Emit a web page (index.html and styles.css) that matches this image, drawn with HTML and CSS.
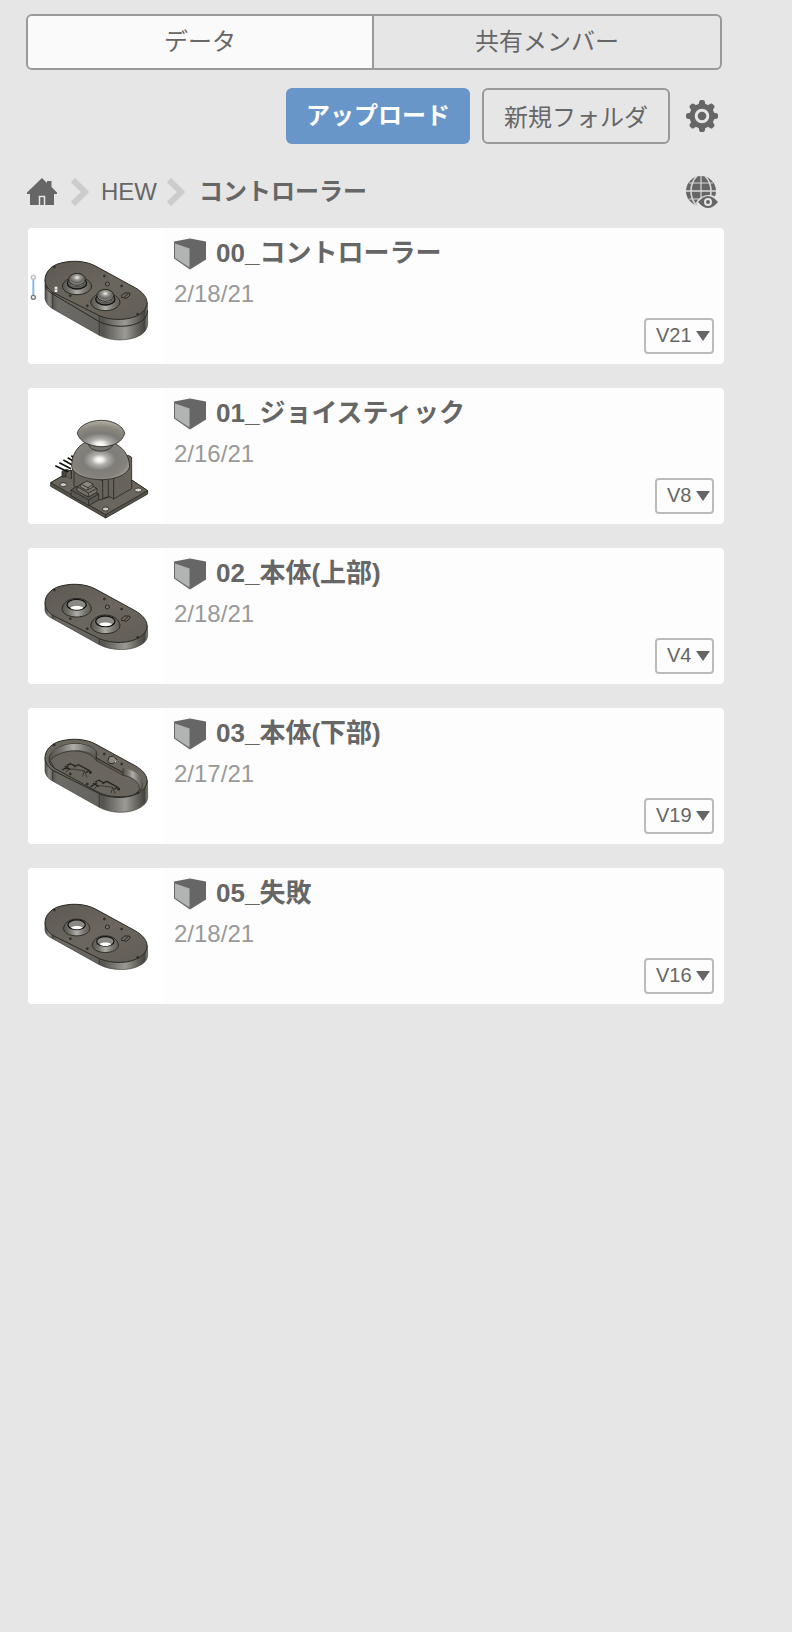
FILE: index.html
```html
<!DOCTYPE html>
<html lang="ja">
<head>
<meta charset="utf-8">
<meta name="viewport" content="width=device-width, initial-scale=1">
<title>コントローラー</title>
<link rel="stylesheet" href="styles.css">
</head>
<body>
<svg class="defs" aria-hidden="true" width="0" height="0">
  <defs>
    <linearGradient id="side" gradientUnits="userSpaceOnUse" x1="75" y1="0" x2="383" y2="0">
      <stop offset="0" stop-color="#4c4a45"/><stop offset=".04" stop-color="#8b8982"/><stop offset=".08" stop-color="#5b5954"/>
      <stop offset=".12" stop-color="#6c6b66"/><stop offset=".5" stop-color="#65635e"/><stop offset=".56" stop-color="#55534d"/>
      <stop offset=".78" stop-color="#9c9a94"/><stop offset=".9" stop-color="#65635c"/><stop offset=".97" stop-color="#45433e"/><stop offset="1" stop-color="#8b8982"/>
    </linearGradient>
    <linearGradient id="face" x1="0" y1="0" x2="1" y2="1">
      <stop offset="0" stop-color="#5d5951"/><stop offset=".5" stop-color="#6b675e"/><stop offset="1" stop-color="#625e55"/>
    </linearGradient>
    <linearGradient id="cone" x1="0" y1="0" x2="1" y2="0">
      <stop offset="0" stop-color="#55534e"/><stop offset=".25" stop-color="#77756f"/><stop offset=".5" stop-color="#b0aeaa"/><stop offset=".75" stop-color="#7c7a75"/><stop offset="1" stop-color="#5d5b55"/>
    </linearGradient>
    <radialGradient id="knob" cx=".5" cy=".35" r=".65">
      <stop offset="0" stop-color="#f4f3f1"/><stop offset=".3" stop-color="#9b9994"/><stop offset=".65" stop-color="#66645f"/><stop offset="1" stop-color="#9a9892"/>
    </radialGradient>
    <radialGradient id="dome" cx=".48" cy=".48" r=".62">
      <stop offset="0" stop-color="#fff"/><stop offset=".1" stop-color="#f0efed"/><stop offset=".22" stop-color="#b3b1ad"/><stop offset=".45" stop-color="#7f7d78"/><stop offset=".75" stop-color="#85827c"/><stop offset="1" stop-color="#b0aba0"/>
    </radialGradient>
    <radialGradient id="cap" cx=".48" cy=".92" r=".9">
      <stop offset="0" stop-color="#fff"/><stop offset=".1" stop-color="#f0efed"/><stop offset=".25" stop-color="#aeaca8"/><stop offset=".48" stop-color="#7c7a75"/><stop offset=".75" stop-color="#8b8880"/><stop offset="1" stop-color="#b5b0a5"/>
    </radialGradient>
    <path id="outline" d="M98 217C64 195 68 152 110 133C148 119 196 121 228 139L345 203C387 226 392 259 362 281C330 303 275 303 238 287Z"/>
    <g id="plate-top">
      <use href="#outline" fill="url(#face)" stroke="#292824" stroke-width="3"/>
      <g fill="#3c3a36" stroke="#24231f" stroke-width="2">
        <circle cx="103" cy="141" r="3"/><circle cx="253" cy="168" r="3"/><circle cx="305" cy="198" r="3"/>
        <circle cx="151" cy="227" r="3"/><circle cx="202" cy="257" r="3"/><circle cx="353" cy="283" r="3"/>
      </g>
      <circle cx="262" cy="192" r="6" fill="#77736a" stroke="#292824" stroke-width="3"/>
      <path d="M304 227L314 219H329L330 225L320 235L305 232ZM313 232L324 221" fill="#6b675e" stroke="#292824" stroke-width="3"/>
    </g>
    <g id="slab">
      <path d="M75 178V203C77 214 86 221 98 227L238 305C275 324 330 325 362 306C376 298 383 288 383 275L382 248Z" fill="url(#side)" stroke="#403e3a" stroke-width="2"/>
      <path d="M98 217V227M238 287V305" stroke="#292824" stroke-width="2"/>
      <use href="#plate-top"/>
    </g>
    <g id="hole">
      <path d="M-44 9C-42-5-28-22 0-22S42-5 44 9C44 24 23 34 0 34S-44 24-44 9Z" fill="url(#cone)" stroke="#292824" stroke-width="3"/>
      <ellipse cy="-3" rx="29" ry="16" fill="#8b8984" stroke="#11110f" stroke-width="4"/>
      <path d="M-19 6C-14-1 15-1 20 6C14 14-14 14-19 6Z" fill="#fff"/>
    </g>
    <g id="stick">
      <path d="M-44 18C-42 5-25-9 0-9S42 5 44 18C44 33 23 44 0 44S-44 33-44 18Z" fill="url(#cone)" stroke="#292824" stroke-width="3"/>
      <ellipse cy="9" rx="29" ry="18" fill="#65635e" stroke="#11110f" stroke-width="4"/>
      <path d="M-18 4V14C-14 22 14 22 18 14V4Z" fill="#a9a7a1" stroke="#292824" stroke-width="2"/>
      <ellipse cy="-2" rx="25" ry="18" fill="url(#knob)" stroke="#292824" stroke-width="3"/>
    </g>
    <symbol id="cube" viewBox="0 0 32 31">
      <path d="M0 3L16 0L32 3V21L16 31L0 20Z" fill="#666"/>
      <path d="M1 5L15.500 10V29L1 19.500Z" fill="#b2b4b3"/>
    </symbol>
    <symbol id="chevron" viewBox="0 0 18 28">
      <path d="M2 2L14 14L2 26" fill="none" stroke="#ccc" stroke-width="6"/>
    </symbol>
  </defs>
</svg>

<main class="panel">
  <div class="tabs" role="tablist">
    <button class="tab tab-active" role="tab" aria-selected="true">データ</button>
    <button class="tab" role="tab" aria-selected="false">共有メンバー</button>
  </div>

  <div class="toolbar">
    <button class="button button-primary">アップロード</button>
    <button class="button">新規フォルダ</button>
    <button class="icon-button" aria-label="設定">
      <svg class="icon" viewBox="0 0 32 32" fill="#666">
        <circle cx="16" cy="16" r="12.500"/>
        <path id="tooth" d="M12.500 5L13.200 1.500Q13.500 0 15 0H17Q18.500 0 18.800 1.500L19.500 5V27L18.800 30.500Q18.500 32 17 32H15Q13.500 32 13.200 30.500L12.500 27Z"/>
        <use href="#tooth" transform="rotate(45 16 16)"/><use href="#tooth" transform="rotate(90 16 16)"/><use href="#tooth" transform="rotate(135 16 16)"/>
        <circle cx="16" cy="16" r="5.800" stroke="#e6e6e6" stroke-width="3"/>
      </svg>
    </button>
  </div>

  <div class="pathbar">
    <nav class="crumbs" aria-label="パス">
      <a class="crumb-home" href="#" aria-label="ホーム">
        <svg class="home" viewBox="0 0 30 28">
          <path d="M15 0L20 5V3H24.500V9L30 14.500V16H27V27H3V16H0V14.500Z" fill="#666"/>
          <path d="M12.500 27V18.500H17.500V27" fill="#666" stroke="#e6e6e6" stroke-width="1.500"/>
        </svg>
      </a>
      <svg class="chevron"><use href="#chevron"/></svg>
      <a class="crumb" href="#">HEW</a>
      <svg class="chevron"><use href="#chevron"/></svg>
      <span class="crumb crumb-current" aria-current="page">コントローラー</span>
    </nav>
    <button class="icon-button" aria-label="公開設定">
      <svg class="icon" viewBox="0 0 32 32">
        <circle cx="15" cy="15" r="15" fill="#666"/>
        <g fill="none" stroke="#d8d8d8"><path d="M0 15H30" stroke-width="1.600"/><path d="M3 7H27M3 23H27M15 0V30" stroke-width="1.200"/><path d="M11 0C3 8 3 22 11 30M19 0C27 8 27 22 19 30" stroke-width="1.600"/></g>
        <path d="M10 27C14 18 27 16 34 24V34H14Z" fill="#e6e6e6"/>
        <path d="M12 26Q22 14 32 26Q22 38 12 26Z" fill="#666"/>
        <circle cx="22" cy="26" r="3" fill="#666" stroke="#e6e6e6" stroke-width="2"/>
      </svg>
    </button>
  </div>

  <ul class="files">
    <li class="file">
      <svg class="thumb" viewBox="24 24 408 408" role="img" aria-label="コントローラー">
        <path d="M75 178V235C77 249 86 259 98 266L238 346C275 365 330 364 362 345C376 335 383 325 383 309L382 248Z" fill="url(#side)" stroke="#403e3a" stroke-width="2"/>
        <path d="M76 196C79 208 87 216 98 222L238 305C275 323 330 324 362 305C375 297 382 288 382 270" fill="none" stroke="#292824" stroke-width="3"/>
        <path d="M98 217V266M238 287V346" stroke="#292824" stroke-width="2"/>
        <use href="#plate-top"/>
        <use href="#stick" x="171" y="180"/><use href="#stick" x="256" y="228"/>
        <path d="M108 200V216" stroke="#f4f4f2" stroke-width="8"/><path d="M103 208H111" stroke="#77736a" stroke-width="2"/>
        <path d="M40 178V227" stroke="#8db9e8" stroke-width="6"/>
        <g fill="#fff" stroke-width="4"><circle cx="40" cy="172" r="6" stroke="#bbb"/><circle cx="40" cy="232" r="6" stroke="#777"/></g>
      </svg>
      <div class="details">
        <h2 class="name"><svg class="cube"><use href="#cube"/></svg>00_コントローラー</h2>
        <p class="date">2/18/21</p>
      </div>
      <div class="version"><select class="version-select" aria-label="バージョン"><option>V21</option></select><svg class="arrow" viewBox="0 0 14 10"><path d="M0 0H14L7 10Z" fill="#666"/></svg></div>
    </li>

    <li class="file">
      <svg class="thumb" viewBox="24 24 408 408" role="img" aria-label="ジョイスティック">
        <g fill="none" stroke="#292824" stroke-width="2.500" stroke-linejoin="round">
          <path d="M92 308L160 269L335 300L383 332V342L257 414L92 319Z" fill="#55524b"/>
          <path d="M92 308L160 269L335 300L383 332L257 404Z" fill="#6a665d"/>
          <path d="M257 404V414"/>
          <ellipse cx="130" cy="314" rx="10" ry="6" fill="#c9c8c4"/><ellipse cx="355" cy="330" rx="11" ry="6" fill="#d5d4d1"/><ellipse cx="257" cy="387" rx="10" ry="6" fill="#c9c8c4"/>
          <path d="M126 274L140 268L154 274V296L140 290L126 291Z" fill="#4a4843"/><path d="M138 290V277L154 270V296" fill="#625f57"/>
        </g>
        <path d="M106 257L143 275M118 248L153 266M130 240L158 256M143 233L160 243M154 227L162 234" stroke="#11110f" stroke-width="5"/>
        <g fill="none" stroke="#292824" stroke-width="2.500" stroke-linejoin="round">
          <path d="M162 275V320L240 360L270 350L281 357L335 326V232L325 226Z" fill="#67635b"/>
          <path d="M248 295V356L265 350V296M281 292V357M240 298L248 303"/>
          <path d="M153 330L171 319L236 342V360L206 377L153 347Z" fill="#5b5851"/>
          <path d="M171 320L199 307L231 326V337L205 351L171 332Z" fill="#77736a"/>
          <path d="M205 340V351M171 320L205 339L231 325M206 360V377M153 330L206 360L236 342"/>
          <path d="M181 321V314L201 303L219 312V321L200 331Z" fill="#8b877e"/><path d="M184 313L204 323L219 313M204 323V330"/>
          <path d="M155 254C157 220 176 191 207 184L276 187C309 199 327 226 329 258C325 284 286 299 242 299C194 298 153 281 155 254Z" fill="url(#dome)"/>
          <path d="M205 193C215 220 268 220 280 193Z" fill="#77746d"/>
          <path d="M172 160C175 139 206 122 242 121S311 139 314 160C308 187 276 201 243 200S179 186 172 160Z" fill="url(#cap)"/>
        </g>
      </svg>
      <div class="details">
        <h2 class="name"><svg class="cube"><use href="#cube"/></svg>01_ジョイスティック</h2>
        <p class="date">2/16/21</p>
      </div>
      <div class="version"><select class="version-select" aria-label="バージョン"><option>V8</option></select><svg class="arrow" viewBox="0 0 14 10"><path d="M0 0H14L7 10Z" fill="#666"/></svg></div>
    </li>

    <li class="file">
      <svg class="thumb" viewBox="24 24 408 408" role="img" aria-label="本体(上部)">
        <use href="#slab" y="9"/>
        <use href="#hole" x="170" y="197"/><use href="#hole" x="256" y="247"/>
      </svg>
      <div class="details">
        <h2 class="name"><svg class="cube"><use href="#cube"/></svg>02_本体(上部)</h2>
        <p class="date">2/18/21</p>
      </div>
      <div class="version"><select class="version-select" aria-label="バージョン"><option>V4</option></select><svg class="arrow" viewBox="0 0 14 10"><path d="M0 0H14L7 10Z" fill="#666"/></svg></div>
    </li>

    <li class="file">
      <svg class="thumb" viewBox="24 24 408 408" role="img" aria-label="本体(下部)">
        <path d="M75 172V214C77 227 86 237 98 243L238 322C275 342 330 342 362 322C376 313 383 304 383 289L382 242Z" fill="url(#side)" stroke="#403e3a" stroke-width="2"/>
        <path d="M98 211V243M238 281V322" stroke="#292824" stroke-width="2"/>
        <use href="#outline" y="-6" fill="#6b675e" stroke="#292824" stroke-width="3"/>
        <path d="M104 205C78 188 83 160 116 142C151 126 193 129 217 143C230 151 233 161 228 173L308 217C326 206 355 222 364 242C376 272 342 290 304 290C278 290 256 287 238 278Z" fill="#5d5951" stroke="#292824" stroke-width="3"/>
        <path d="M91 181C85 168 98 150 116 142C151 126 193 129 217 143C230 151 233 160 230 171C206 142 120 144 91 181Z" fill="url(#cone)"/>
        <path d="M309 205C342 208 369 229 368 252Q364 266 358 270C359 250 338 231 309 226Z" fill="url(#cone)"/>
        <path d="M91 182C121 144 204 142 229 182L309 226C341 231 360 250 358 270C352 282 334 290 304 290C278 290 256 287 238 278L104 205Z" fill="#6a665d" stroke="#292824" stroke-width="2"/>
        <path d="M229 155V182M309 205V226" stroke="#292824" stroke-width="2"/>
        <g id="contacts" fill="none" stroke="#24231f" stroke-width="4">
          <path d="M127 210L146 199M134 199L151 209M151 190L167 199M140 196L154 190M162 201L175 194L207 211L198 218"/>
          <path d="M154 207L193 212L201 232M193 212L188 230" stroke-width="2"/>
          <circle cx="211" cy="217" r="2.500"/><path d="M137 218Q141 208 154 207" stroke-width="2"/>
        </g>
        <use href="#contacts" x="85" y="50"/>
        <path d="M263 184L268 170L280 168L290 178L280 191L270 190Z" fill="#8c8981" stroke="#292824" stroke-width="3"/>
        <path d="M284 183L290 180L285 188Z" fill="#fff"/>
        <g fill="#3c3a36" stroke="#24231f" stroke-width="2"><circle cx="103" cy="135" r="3"/><circle cx="253" cy="162" r="3"/><circle cx="305" cy="192" r="3"/><circle cx="151" cy="222" r="3"/><circle cx="202" cy="252" r="3"/><circle cx="353" cy="279" r="3"/></g>
      </svg>
      <div class="details">
        <h2 class="name"><svg class="cube"><use href="#cube"/></svg>03_本体(下部)</h2>
        <p class="date">2/17/21</p>
      </div>
      <div class="version"><select class="version-select" aria-label="バージョン"><option>V19</option></select><svg class="arrow" viewBox="0 0 14 10"><path d="M0 0H14L7 10Z" fill="#666"/></svg></div>
    </li>

    <li class="file">
      <svg class="thumb" viewBox="24 24 408 408" role="img" aria-label="失敗">
        <use href="#slab" y="9"/>
        <use href="#hole" transform="translate(170 197) scale(.9)"/><use href="#hole" transform="translate(256 247) scale(.9)"/>
      </svg>
      <div class="details">
        <h2 class="name"><svg class="cube"><use href="#cube"/></svg>05_失敗</h2>
        <p class="date">2/18/21</p>
      </div>
      <div class="version"><select class="version-select" aria-label="バージョン"><option>V16</option></select><svg class="arrow" viewBox="0 0 14 10"><path d="M0 0H14L7 10Z" fill="#666"/></svg></div>
    </li>
  </ul>
</main>
</body>
</html>
```
FILE: styles.css
```css
* {
  box-sizing: border-box;
}

body {
  margin: 0;
  background: #e6e6e6;
  color: #666;
  font-family: "Liberation Sans", "Noto Sans CJK JP", sans-serif;
  font-size: 24px;
}

button,
select {
  margin: 0;
  color: inherit;
  font: inherit;
}

svg {
  display: block;
  flex: none;
}

.defs {
  position: absolute;
}

.panel {
  padding: 14px 68px 24px 26px;
}

.tabs {
  display: grid;
  grid-template-columns: 1fr 1fr;
  height: 56px;
  margin-right: 2px;
  overflow: hidden;
  border: 2px solid #999;
  border-radius: 6px;
}

.tab {
  padding: 0 0 6px;
  border: 0;
  background: transparent;
}

.tab-active {
  border-right: 2px solid #999;
  background: #fafafa;
}

.toolbar {
  display: flex;
  align-items: center;
  justify-content: flex-end;
  gap: 12px;
  margin-top: 18px;
  padding-right: 6px;
}

.button {
  height: 56px;
  padding: 0 20px 2px;
  border: 2px solid #999;
  border-radius: 6px;
  background: transparent;
}

.button-primary {
  padding: 0 20px 6px;
  border: 0;
  background: #6996c8;
  color: #fff;
  font-weight: bold;
}

.icon-button {
  padding: 0;
  border: 0;
  background: transparent;
}

.toolbar .icon-button {
  margin-left: 4px;
}

.icon {
  width: 32px;
  height: 32px;
}

.pathbar {
  display: flex;
  align-items: center;
  justify-content: space-between;
  height: 40px;
  margin-top: 28px;
  padding-right: 6px;
}

.crumbs {
  display: flex;
  align-items: center;
}

.crumb-home {
  padding-left: 1px;
}

.home {
  width: 30px;
  height: 28px;
}

.chevron {
  width: 18px;
  height: 28px;
}

.crumb-home + .chevron {
  margin: 0 12px 0 14px;
}

.crumb + .chevron {
  margin: 0 14px 0 10px;
}

.crumb {
  color: inherit;
  line-height: 32px;
  text-decoration: none;
}

.crumb-current {
  font-weight: bold;
}

.files {
  display: grid;
  gap: 24px;
  margin: 16px 0 0 2px;
  padding: 0;
  list-style: none;
}

.file {
  display: flex;
  overflow: hidden;
  border-radius: 4px;
  background: #fdfdfd;
}

.thumb {
  width: 136px;
  height: 136px;
  background: #fff;
}

.details {
  flex: 1;
  min-width: 0;
  padding: 10px 0 0 10px;
}

.name {
  display: flex;
  align-items: flex-start;
  gap: 10px;
  margin: 0;
  font-size: 26px;
  line-height: 30px;
}

.cube {
  width: 32px;
  height: 32px;
}

.date {
  margin: 10px 0 0;
  color: #999;
  line-height: 28px;
}

.version {
  display: grid;
  align-self: flex-end;
  align-items: center;
  margin: 0 10px 10px 0;
}

.version-select {
  grid-area: 1 / 1;
  height: 36px;
  padding: 0 20px 2px 10px;
  border: 2px solid #bbb;
  border-radius: 4px;
  background: transparent;
  font-size: 20px;
  appearance: none;
}

.arrow {
  grid-area: 1 / 1;
  justify-self: end;
  width: 14px;
  height: 10px;
  margin-right: 4px;
  pointer-events: none;
}
```
